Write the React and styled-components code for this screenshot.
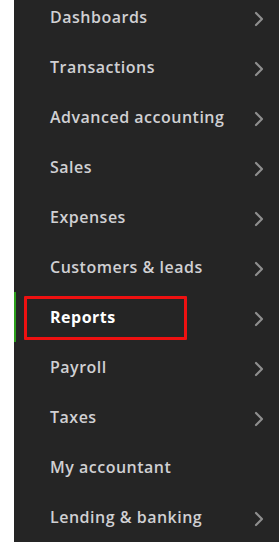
import styled, { createGlobalStyle } from 'styled-components';

const GlobalStyle = createGlobalStyle`
  html, body {
    margin: 0;
    padding: 0;
    background: #ffffff;
  }
  body {
    font-family: "Open Sans", "Liberation Sans", sans-serif;
  }
`;

const items = [
  { label: 'Dashboards', arrow: true },
  { label: 'Transactions', arrow: true },
  { label: 'Advanced accounting', arrow: true },
  { label: 'Sales', arrow: true },
  { label: 'Expenses', arrow: true },
  { label: 'Customers & leads', arrow: true },
  { label: 'Reports', arrow: true, active: true },
  { label: 'Payroll', arrow: true },
  { label: 'Taxes', arrow: true },
  { label: 'My accountant', arrow: false },
  { label: 'Lending & banking', arrow: true },
];

const Chevron = () => (
  <svg width="10" height="16" viewBox="0 0 10 16" fill="none">
    <polyline points="2,2 8,8 2,14" stroke="#8e8e8e" strokeWidth="2.2" strokeLinecap="round" strokeLinejoin="round" />
  </svg>
);

const App = () => {
  return (
    <>
      <GlobalStyle />
      <Page>
        <Panel>
          <Menu>
            {items.map(item => (
              <Row key={item.label} $active={item.active}>
                <Label $active={item.active}>{item.label}</Label>
                {item.arrow && <Arrow><Chevron /></Arrow>}
                {item.active && <Highlight />}
              </Row>
            ))}
          </Menu>
        </Panel>
      </Page>
    </>
  );
};

export default App;

const Page = styled.div`
  width: 279px;
  height: 546px;
  display: flex;
  overflow: hidden;
`;

const Panel = styled.nav`
  margin-left: 14px;
  width: 265px;
  height: 542px;
  background: #252525;
  overflow: hidden;
`;

const Menu = styled.ul`
  list-style: none;
  margin: -8px 0 0;
  padding: 0;
`;

const Row = styled.li`
  position: relative;
  height: 50px;
  display: flex;
  align-items: center;
  padding: 0 15px 0 36px;
  box-shadow: ${p => (p.$active ? 'inset 2px 0 0 #2ca01c' : 'none')};
`;

const Label = styled.span`
  flex: 1;
  font-size: 16px;
  font-weight: ${p => (p.$active ? 700 : 600)};
  color: ${p => (p.$active ? '#ffffff' : '#d0d0d3')};
  letter-spacing: 0.5px;
  white-space: nowrap;
`;

const Arrow = styled.span`
  display: flex;
  align-items: center;
  margin-top: 3px;
`;

const Highlight = styled.div`
  position: absolute;
  left: 10px;
  top: 4px;
  width: 163px;
  height: 44px;
  box-sizing: border-box;
  border: 3px solid #ee1111;
  border-radius: 1px;
  pointer-events: none;
`;
